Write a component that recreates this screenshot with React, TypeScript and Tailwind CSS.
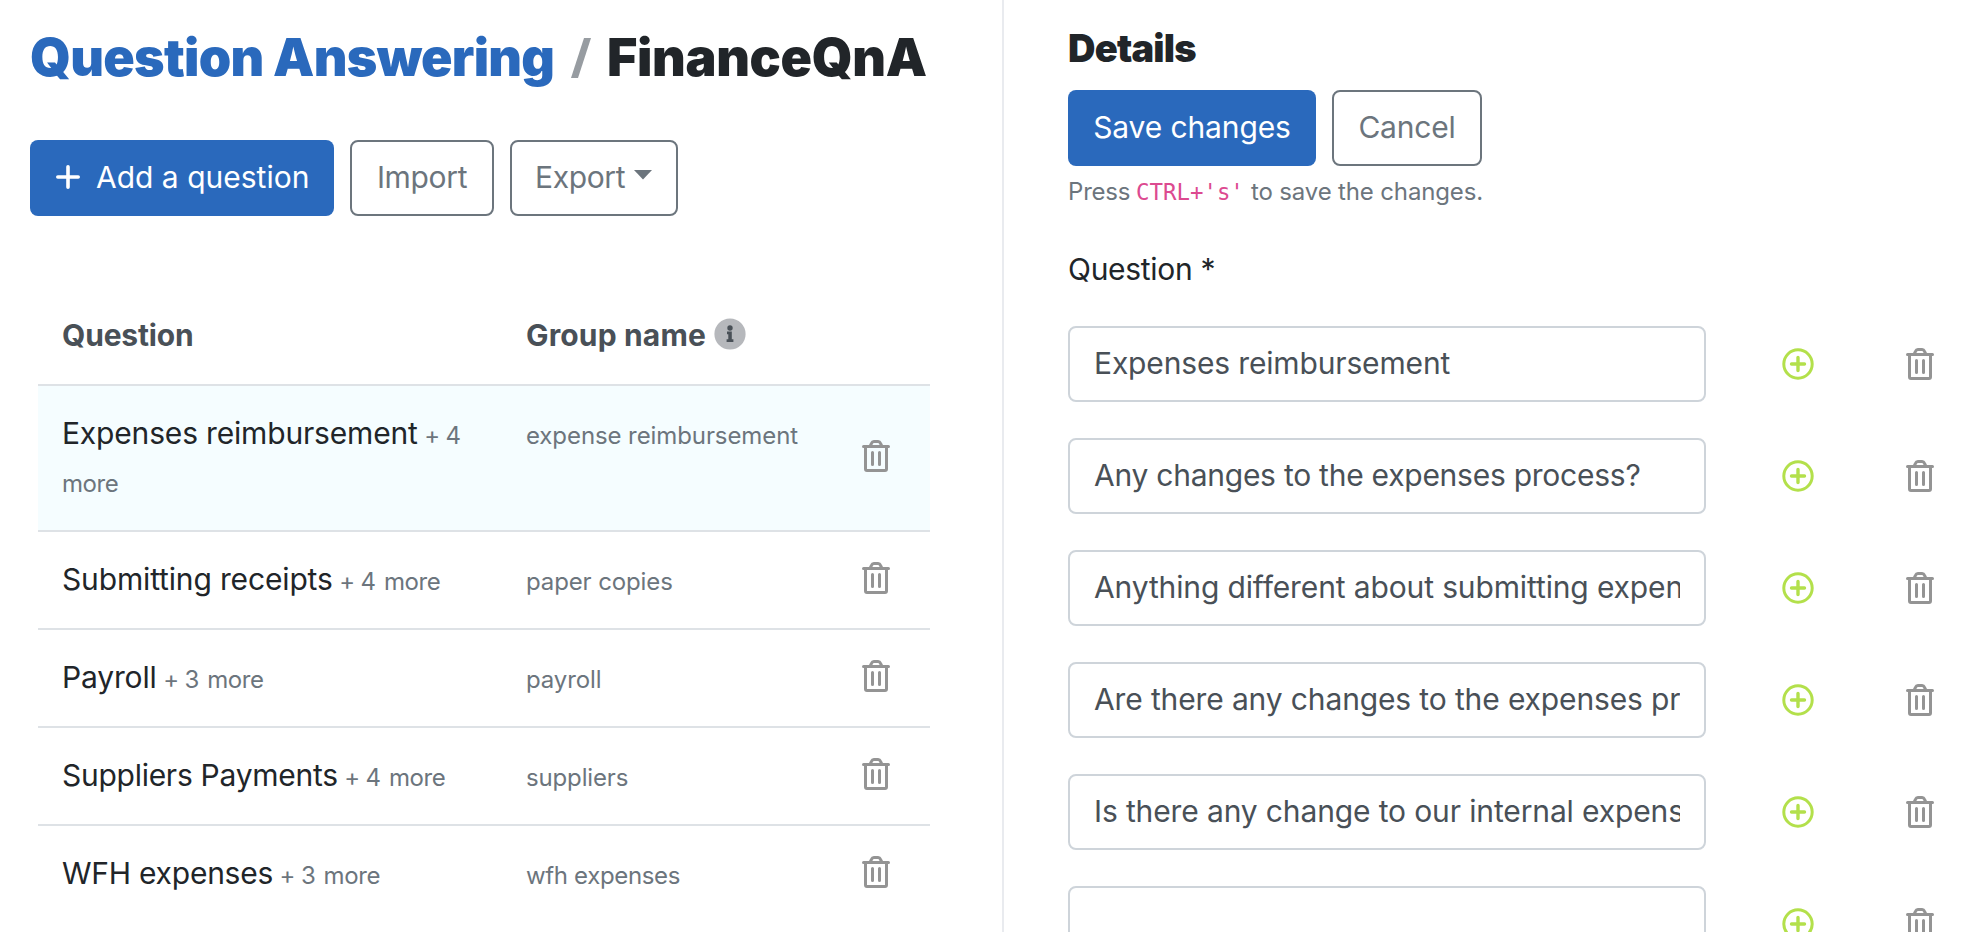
import React from "react";

const rows = [
  { question: "Expenses reimbursement", count: "+ 4", group: "expense reimbursement", active: true, q: "tracking-[-0.17px]", g: "tracking-[-0.09px]" },
  { question: "Submitting receipts", count: "+ 4", group: "paper copies", active: false, q: "tracking-[-0.15px]", g: "tracking-[-0.12px]" },
  { question: "Payroll", count: "+ 3", group: "payroll", active: false, q: "tracking-[-0.15px]", g: "tracking-[-0.1px]" },
  { question: "Suppliers Payments", count: "+ 4", group: "suppliers", active: false, q: "tracking-[-0.27px]", g: "tracking-[-0.15px]" },
  { question: "WFH expenses", count: "+ 3", group: "wfh expenses", active: false, q: "tracking-[-0.24px]", g: "tracking-[-0.35px]" },
];

const questions = [
  { text: "Expenses reimbursement", t: "tracking-[-0.15px]" },
  { text: "Any changes to the expenses process?", t: "tracking-[-0.25px]" },
  { text: "Anything different about submitting expenses?", t: "tracking-[-0.13px]" },
  { text: "Are there any changes to the expenses process?", t: "tracking-[-0.13px]" },
  { text: "Is there any change to our internal expenses process?", t: "tracking-[-0.13px]" },
  { text: "", t: "tracking-normal" },
];

function TrashIcon() {
  return (
    <svg width="28" height="32" viewBox="0 0 28 32" fill="none" stroke="#949494" strokeWidth="3" strokeLinecap="round" strokeLinejoin="round" className="block shrink-0">
      <path d="M1.5 6.5h25" />
      <path d="M8 6.5l1.6-3.4a2.6 2.6 0 0 1 2.3-1.6h4.2a2.6 2.6 0 0 1 2.3 1.6L20 6.5" />
      <path d="M3.5 6.5V29a1.5 1.5 0 0 0 1.5 1.5h18a1.5 1.5 0 0 0 1.5-1.5V6.5" />
      <path d="M10.5 12.5v12M17.5 12.5v12" />
    </svg>
  );
}

function AddIcon() {
  return (
    <svg width="32" height="32" viewBox="0 0 32 32" fill="none" stroke="#b3e04b" className="block shrink-0">
      <circle cx="16" cy="16" r="14.2" strokeWidth="3" />
      <path d="M9.5 16h13M16 9.5v13" strokeWidth="3.4" strokeLinecap="round" />
    </svg>
  );
}

function InfoIcon() {
  return (
    <svg width="32" height="32" viewBox="0 0 32 32" className="mb-[2px] ml-[8px] block shrink-0">
      <circle cx="16" cy="16" r="15.6" fill="#b6b8bc" />
      <circle cx="16" cy="10" r="2.7" fill="#495057" />
      <path d="M13 13.5h4.8v7.7h1.6v2.7h-6.8v-2.7h1.7v-5H13z" fill="#495057" />
    </svg>
  );
}

export default function App() {
  return (
    <div className="flex h-[932px] w-full overflow-hidden bg-white font-['Inter','Liberation_Sans',sans-serif] text-[30px] leading-[48px] text-[#212529]">
      <section className="w-[1004px] shrink-0 border-r-2 border-[#e9ebef] pt-[24px] pl-[30px]">
        <h1 className="flex h-[68px] items-center text-[52px] leading-[68px] font-black whitespace-nowrap">
          <span className="w-[540px] tracking-[-0.72px] text-[#2a69bc]">Question Answering</span>
          <svg width="22" height="42" viewBox="0 0 22 42" className="block shrink-0"><path d="M14 1h7L8 41H1z" fill="#979ca1" /></svg>
          <span className="ml-[15px] tracking-[-0.35px]">FinanceQnA</span>
        </h1>
        <div className="mt-[48px] flex gap-4">
          <button className="flex h-[76px] w-[304px] items-center rounded-lg bg-[#2a69bc] pb-[2px] pl-[26px] whitespace-nowrap text-white">
            <svg width="24" height="24" viewBox="0 0 24 24" stroke="#ffffff" strokeWidth="3.6" strokeLinecap="round" className="block shrink-0"><path d="M1.8 12h20.4M12 1.8v20.4" /></svg>
            <span className="ml-[16px]">Add a question</span>
          </button>
          <button className="h-[76px] w-[144px] rounded-lg border-2 border-[#6c757d] pb-[2px] tracking-[-0.34px] text-[#6c757d]">Import</button>
          <button className="flex h-[76px] w-[168px] items-center rounded-lg border-2 border-[#6c757d] pb-[2px] pl-[23px] text-[#6c757d]">
            <span className="tracking-[-0.36px]">Export</span>
            <svg width="18" height="10" viewBox="0 0 18 10" className="mb-[4px] ml-[9px] block shrink-0"><path d="M0 0h18L9 9.6z" fill="#6c757d" /></svg>
          </button>
        </div>
        <div className="mt-[70px] ml-[8px] w-[892px]">
          <div className="flex h-[98px] items-center px-[24px] font-bold text-[#495057]">
            <div className="w-[464px] tracking-[-0.16px]">Question</div>
            <div className="flex items-center tracking-[0.15px]">Group name<InfoIcon /></div>
          </div>
          {rows.map((row) => (
            <div key={row.question} className={row.active ? "flex border-t-2 border-[#dee2e6] bg-[#f5fdff] px-[24px] pt-[23px] pb-[25px]" : "flex border-t-2 border-[#dee2e6] px-[24px] pt-[23px] pb-[25px]"}>
              <div className="w-[464px] pr-[24px]">
                <span className={row.q}>{row.question}</span>{" "}
                <span className="-ml-[2px] text-[24px] leading-0 tracking-[-0.6px] text-[#6c757d]">{row.count}</span>{" "}
                <span className="text-[24px] leading-0 tracking-[-0.4px] text-[#6c757d]">more</span>
              </div>
              <div className="w-[336px]">
                <span className={row.g + " text-[24px] leading-0 text-[#6c757d]"}>{row.group}</span>
              </div>
              <div className="-my-2 flex items-center pb-[2px]"><TrashIcon /></div>
            </div>
          ))}
        </div>
      </section>
      <section className="flex-1 pt-[24px] pl-[64px]">
        <h2 className="h-[48px] text-[38px] font-black tracking-[-0.8px]">Details</h2>
        <div className="mt-[18px] flex gap-4">
          <button className="h-[76px] w-[248px] rounded-lg bg-[#2a69bc] pb-[2px] tracking-[-0.11px] text-white">Save changes</button>
          <button className="h-[76px] w-[150px] rounded-lg border-2 border-[#6c757d] pb-[2px] tracking-[-0.2px] text-[#6c757d]">Cancel</button>
        </div>
        <p className="mt-[8px] h-[36px] text-[24px] leading-[36px] whitespace-nowrap text-[#6c757d]">
          <span className="inline-block w-[68px] tracking-[-0.2px]">Press</span>
          <code className="inline-block w-[115px] font-['DejaVu_Sans_Mono','Liberation_Mono',monospace] text-[22.4px] text-[#dc4a90]">CTRL+'s'</code>
          <span className="tracking-[-0.15px]">to save the changes.</span>
        </p>
        <label className="mt-[35px] block tracking-[-0.3px]">Question *</label>
        <div className="mt-[33px] flex flex-col gap-9">
          {questions.map((item, i) => (
            <div key={i} className="flex h-[76px] items-center">
              <input type="text" readOnly value={item.text} className={item.t + " h-[76px] w-[638px] rounded-lg border-2 border-[#ced4da] bg-white px-[24px] pb-[2px] text-[#495057] outline-none"} />
              <span className="ml-[76px]"><AddIcon /></span>
              <span className="ml-[92px]"><TrashIcon /></span>
            </div>
          ))}
        </div>
      </section>
    </div>
  );
}
